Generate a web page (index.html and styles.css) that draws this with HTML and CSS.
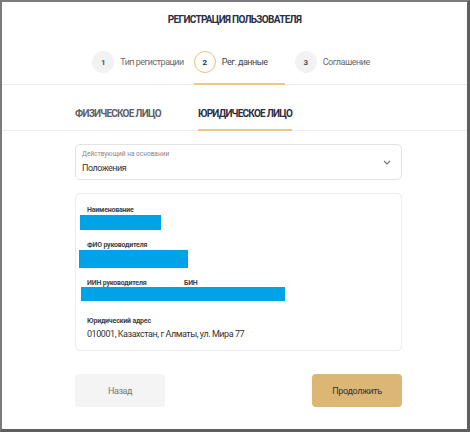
FILE: index.html
```html
<!DOCTYPE html>
<html lang="ru">
    <head>
        <title>Регистрация пользователя</title>
        <meta charset="UTF-8">
        <meta name="viewport" content="width=device-width, initial-scale=1.0">
        <link rel="stylesheet" href="styles.css">
    </head>
    <body>
        <div class="frame">
            <h1 class="title">РЕГИСТРАЦИЯ ПОЛЬЗОВАТЕЛЯ</h1>

            <div class="steps">
                <div class="step">
                    <span class="step-num">1</span>
                    <span class="step-label">Тип регистрации</span>
                </div>
                <div class="step active">
                    <span class="step-num">2</span>
                    <span class="step-label">Рег. данные</span>
                </div>
                <div class="step">
                    <span class="step-num">3</span>
                    <span class="step-label">Соглашение</span>
                </div>
            </div>

            <div class="tabs">
                <div class="tab">ФИЗИЧЕСКОЕ ЛИЦО</div>
                <div class="tab active">ЮРИДИЧЕСКОЕ ЛИЦО</div>
            </div>

            <div class="content">
                <div class="select">
                    <div class="select-text">
                        <div class="select-label">Действующий на основании</div>
                        <div class="select-value">Положения</div>
                    </div>
                    <svg class="chevron" width="8" height="5" viewBox="0 0 8 5">
                        <path d="M1 1l3 3 3-3" fill="none" stroke="#777" stroke-width="1.2"/>
                    </svg>
                </div>

                <div class="card">
                    <div class="field">
                        <div class="field-label">Наименование</div>
                        <div class="mask mask-name"></div>
                    </div>
                    <div class="field">
                        <div class="field-label">ФИО руководителя</div>
                        <div class="mask mask-fio"></div>
                    </div>
                    <div class="field field-last">
                        <div class="field-label">ИИН руководителя <span class="bin">БИН</span></div>
                        <div class="mask mask-iin"></div>
                    </div>
                    <div class="field">
                        <div class="field-label">Юридический адрес</div>
                        <div class="field-value">010001, Казахстан, г Алматы, ул. Мира 77</div>
                    </div>
                </div>

                <div class="buttons">
                    <button class="btn btn-back">Назад</button>
                    <button class="btn btn-next">Продолжить</button>
                </div>
            </div>
        </div>
    </body>
</html>
```

FILE: styles.css
```css
body {
    margin: 0;
    padding: 0;
    background-color: white;
    font-family: Roboto, "Liberation Sans", sans-serif;
}
.frame {
    width: 470px;
    height: 432px;
    box-sizing: border-box;
    border-top: 2px solid #7b7b7b;
    border-left: 2px solid #7b7b7b;
    border-right: 3px solid #5e5e5e;
    border-bottom: 3px solid #5e5e5e;
    background-color: white;
    overflow: hidden;
}
.title {
    margin: 0;
    padding-top: 12px;
    text-align: center;
    font-size: 10px;
    line-height: 12px;
    font-weight: 700;
    letter-spacing: -0.7px;
    color: #2b2e45;
}
.steps {
    display: flex;
    justify-content: center;
    gap: 10px;
    margin-top: 25px;
    padding-left: 9px;
    border-bottom: 1px solid #ececec;
}
.step {
    display: flex;
    align-items: center;
    gap: 6px;
    min-width: 91px;
    padding-bottom: 10px;
    border-bottom: 2px solid transparent;
    margin-bottom: -1px;
}
.step.active {
    border-bottom-color: #ecc982;
}
.step-num {
    width: 22px;
    height: 22px;
    border-radius: 50%;
    background-color: #f2f2f2;
    box-sizing: border-box;
    display: flex;
    align-items: center;
    justify-content: center;
    font-size: 8px;
    font-weight: 700;
    color: #555;
}
.step.active .step-num {
    background-color: white;
    border: 1px solid #e6c27a;
    color: #2b2e45;
}
.step-label {
    font-size: 9px;
    color: #6b6b6b;
    letter-spacing: -0.5px;
}
.step.active .step-label {
    color: #444;
}
.tabs {
    display: flex;
    gap: 37px;
    padding-left: 73px;
    border-bottom: 1px solid #ececec;
}
.tab {
    padding-top: 23px;
    padding-bottom: 9px;
    font-size: 10px;
    line-height: 12px;
    font-weight: 700;
    color: #60606b;
    letter-spacing: -0.75px;
    border-bottom: 2px solid transparent;
    margin-bottom: -1px;
}
.tab.active {
    color: #2b2e45;
    border-bottom-color: #ecc982;
}
.content {
    margin: 13px 0 0 73px;
    width: 327px;
}
.select {
    height: 36px;
    box-sizing: border-box;
    border: 1px solid #e3e3e3;
    border-radius: 5px;
    display: flex;
    align-items: center;
    justify-content: space-between;
    padding: 0 10px 0 6px;
}
.select-text {
    padding-top: 1px;
}
.select-label {
    font-size: 6.5px;
    color: #888;
    line-height: 9px;
}
.select-value {
    font-size: 9px;
    color: #333;
    line-height: 13px;
    margin-top: 3px;
    letter-spacing: -0.5px;
}
.card {
    margin-top: 13px;
    height: 158px;
    box-sizing: border-box;
    border: 1px solid #ececec;
    border-radius: 5px;
    padding: 11px 0 0 3px;
}
.field {
    margin-bottom: 10px;
}
.field-last {
    margin-bottom: 15px;
}
.field-label {
    font-size: 7px;
    line-height: 10px;
    font-weight: 700;
    color: #444;
    padding-left: 8px;
    letter-spacing: -0.2px;
}
.bin {
    margin-left: 36px;
}
.mask {
    background-color: #00a2e8;
}
.mask-name {
    width: 81px;
    height: 15px;
    margin-left: 1px;
}
.mask-fio {
    width: 109px;
    height: 18px;
}
.mask-iin {
    width: 204px;
    height: 14px;
    margin-left: 2px;
    margin-top: -1px;
}
.field-value {
    font-size: 9px;
    line-height: 13px;
    color: #333;
    padding-left: 8px;
    margin-top: 2px;
    letter-spacing: -0.45px;
}
.buttons {
    display: flex;
    justify-content: space-between;
    margin-top: 23px;
}
.btn {
    width: 90px;
    height: 33px;
    border: none;
    border-radius: 4px;
    font-family: Roboto, "Liberation Sans", sans-serif;
    font-size: 9px;
    letter-spacing: -0.4px;
}
.btn-back {
    background-color: #f4f4f4;
    color: #777;
}
.btn-next {
    background-color: #dbb674;
    color: #333;
}
```
